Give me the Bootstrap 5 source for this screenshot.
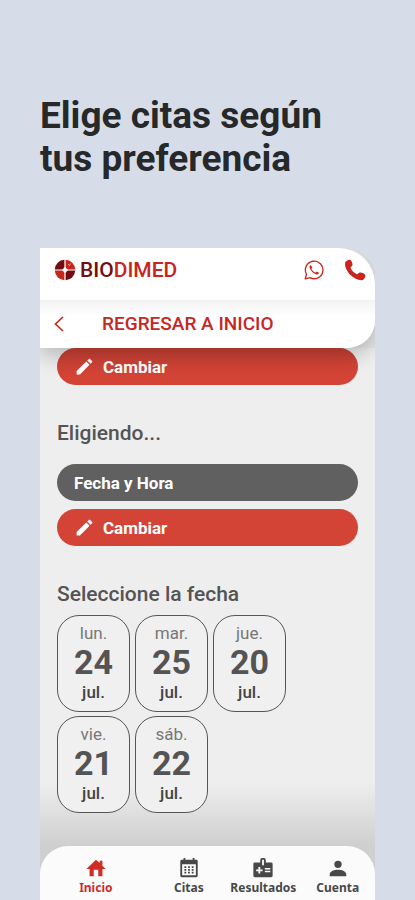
<!DOCTYPE html>
<html lang="es">
<head>
<meta charset="utf-8">
<meta name="viewport" content="width=device-width, initial-scale=1">
<title>Biodimed</title>
<link href="https://cdn.jsdelivr.net/npm/bootstrap@5.3.0/dist/css/bootstrap.min.css" rel="stylesheet">
<style>
  body { background: #d7dde8; font-family: Roboto, "Liberation Sans", sans-serif; color: #545454; }
  .page { padding: 94px 40px 0; }
  .headline { font-size: 37px; line-height: 43px; color: #262829; margin-bottom: 68px; }
  .phone { background: #e6e7e9; border-top-right-radius: 28px; }
  .top-block { background: #fff; border-radius: 0 36px 28px 0; box-shadow: 0 6px 22px rgba(0, 0, 0, .26); z-index: 1; }
  .brand-bar { height: 52px; padding: 0 9px 8px 14px; }
  .brand-name { font-size: 21px; line-height: 24px; font-weight: 500; color: #c9251c; text-decoration: none; }
  .brand-dark { color: #740c10; }
  .back-bar { height: 48px; padding: 0 14px; background: linear-gradient(#f3f3f3, #fff 16px); border-bottom-right-radius: 28px; }
  .back-link { font-size: 19px; line-height: 24px; font-weight: 500; color: #c5281f; text-decoration: none; gap: 38px; }
  .content-area { padding: 0 17px 33px; background: linear-gradient(#eeeeee calc(100% - 64px), #cfcfcf); }
  .pill { height: 37px; border: 0; border-radius: 19px; padding: 0 17px; font-size: 17px; line-height: 24px; font-weight: 700; color: #fff; }
  .pill-red { background: #d34436; gap: 8px; }
  .pill-top { background: linear-gradient(#c94034, #d34436 70%); }
  .pill-gray { background: #606060; }
  .section-title { font-size: 21px; line-height: 24px; font-weight: 500; color: #545454; padding-top: 36px; margin: 0; }
  .pill-stack { padding-top: 19px; }
  .dates { gap: 4px 5px; padding-top: 9px; }
  .date-btn { width: 73px; height: 97px; border: 1px solid #555; border-radius: 22px; background: #f0f0f0; color: #545454; padding: 0; }
  .date-day { font-size: 17px; line-height: 22px; font-weight: 400; color: #777; }
  .date-num { font-size: 34px; line-height: 36px; font-weight: 700; }
  .date-month { font-size: 17px; line-height: 25px; font-weight: 500; color: #444; }
  .nav-wrap { background: #cfcfcf; }
  .tabs { display: grid; grid-template-columns: 3fr 2fr 2fr 2fr; background: #fbfbfb; border-radius: 28px 28px 0 0; padding: 11px 0 4px; }
  .tab-link { font-family: "Noto Sans", sans-serif; font-size: 12px; line-height: 16px; font-weight: 700; color: #484848; text-decoration: none; gap: 1px; }
  .tab-active { color: #d02c25; }
</style>
<script src="https://cdn.jsdelivr.net/npm/bootstrap@5.3.0/dist/js/bootstrap.bundle.min.js"></script>
</head>
<body>
<div class="page min-vh-100 d-flex flex-column">
  <h1 class="headline fw-bold">Elige citas según<br>tus preferencia</h1>
  <div class="phone flex-grow-1 d-flex flex-column overflow-hidden">
    <header class="top-block position-relative">
      <div class="brand-bar d-flex align-items-center justify-content-between">
        <a class="brand-name d-flex align-items-center gap-1" href="#">
          <svg width="22" height="22" viewBox="0 0 22 22" aria-hidden="true">
            <path d="M10.400 .8A10 10 0 0 0 .8 10.400H8Q9.800 9.800 10.400 8Z" fill="#740c10"/>
            <path d="M11.600 .8A10 10 0 0 1 21.200 10.400H14Q12.200 9.800 11.600 8Z" fill="#c9251c"/>
            <path d="M10.400 21.200A10 10 0 0 1 .8 11.600H8Q9.800 12.200 10.400 14Z" fill="#c9251c"/>
            <path d="M11.600 21.200A10 10 0 0 0 21.200 11.600H14Q12.200 12.200 11.600 14Z" fill="#740c10"/>
            <path d="M14 5l1.500 1.500 1-2" stroke="#fff" stroke-width=".5" fill="none"/>
          </svg>
          <span><span class="brand-dark">BIO</span>DIMED</span>
        </a>
        <div class="d-flex align-items-center gap-3">
          <a href="#" class="d-flex me-1" aria-label="WhatsApp">
            <svg width="20" height="20" viewBox="0 0 20 20" fill="none"><path d="M1.200 18.800L2.500 14.200A8.800 8.800 0 1 1 5.900 17.600Z" stroke="#c9251c" stroke-width="1.300" stroke-linejoin="round"/><path d="M6.800 5C5.600 5.400 5.200 6.700 5.800 8.200 7 11.100 9 13.200 11.800 14.300 13.400 14.900 14.800 14.200 14.900 12.800L12.700 11.500 11.600 12.800C9.800 12.100 8.200 10.700 7.300 8.800L8.300 7.700Z" fill="#c9251c"/></svg>
          </a>
          <a href="#" class="d-flex" aria-label="Llamar">
            <svg width="22" height="22" viewBox="0 0 22 22" fill="#c9251c"><path d="M1.300 3.200C2.500 1.500 4.500 .4 6 .8 7.600 1.400 8.700 4.200 8.500 6 8.300 7.300 6.900 7.800 6.500 8.800 7.500 11.500 10 14 12.800 15.200 14 15 14.600 13.600 15.900 13.400 17.900 13.200 20.900 14.500 21.300 16.200 21.600 17.800 20.600 19.800 18.900 20.900 15.500 22 10 19.500 6.500 16 3 12.500 .2 7 1.300 3.200Z"/></svg>
          </a>
        </div>
      </div>
      <div class="back-bar d-flex align-items-center">
        <a class="back-link d-flex align-items-center" href="#">
          <svg width="10" height="16" viewBox="0 0 10 16" fill="none" stroke="#c5281f" stroke-width="1.700" aria-hidden="true"><path d="M9 1L1.500 8L9 15"/></svg>
          <span>REGRESAR A INICIO</span>
        </a>
      </div>
    </header>
    <main class="content-area flex-grow-1">
      <button type="button" class="pill pill-red pill-top d-flex align-items-center w-100">
        <svg width="21" height="21" viewBox="0 0 24 24" fill="#fff" aria-hidden="true"><path d="M3 17.250V21h3.750L17.810 9.940l-3.750-3.750L3 17.250zM20.710 7.040a1 1 0 0 0 0-1.410l-2.340-2.340a1 1 0 0 0-1.410 0l-1.830 1.830 3.750 3.750 1.830-1.830z"/></svg>
        <span>Cambiar</span>
      </button>
      <h2 class="section-title">Eligiendo...</h2>
      <div class="pill-stack d-grid gap-2">
        <button type="button" class="pill pill-gray text-start">Fecha y Hora</button>
        <button type="button" class="pill pill-red d-flex align-items-center">
          <svg width="21" height="21" viewBox="0 0 24 24" fill="#fff" aria-hidden="true"><path d="M3 17.250V21h3.750L17.810 9.940l-3.750-3.750L3 17.250zM20.710 7.040a1 1 0 0 0 0-1.410l-2.340-2.340a1 1 0 0 0-1.410 0l-1.830 1.830 3.750 3.750 1.830-1.830z"/></svg>
          <span>Cambiar</span>
        </button>
      </div>
      <h2 class="section-title">Seleccione la fecha</h2>
      <div class="dates d-flex flex-wrap">
        <button type="button" class="date-btn d-flex flex-column align-items-center justify-content-center"><span class="date-day">lun.</span><span class="date-num">24</span><span class="date-month">jul.</span></button>
        <button type="button" class="date-btn d-flex flex-column align-items-center justify-content-center"><span class="date-day">mar.</span><span class="date-num">25</span><span class="date-month">jul.</span></button>
        <button type="button" class="date-btn d-flex flex-column align-items-center justify-content-center"><span class="date-day">jue.</span><span class="date-num">20</span><span class="date-month">jul.</span></button>
        <button type="button" class="date-btn d-flex flex-column align-items-center justify-content-center"><span class="date-day">vie.</span><span class="date-num">21</span><span class="date-month">jul.</span></button>
        <button type="button" class="date-btn d-flex flex-column align-items-center justify-content-center"><span class="date-day">sáb.</span><span class="date-num">22</span><span class="date-month">jul.</span></button>
      </div>
    </main>
    <div class="nav-wrap">
      <nav class="tabs">
        <a class="tab-link tab-active d-flex flex-column align-items-center" href="#">
          <svg width="22" height="22" viewBox="0 0 24 24" fill="currentColor" aria-hidden="true"><path d="M9.500 21v-7h5v7H19v-8h3.500L19 9.500V4h-3v2.500L12 3 1.500 13H5v8z"/></svg>
          Inicio
        </a>
        <a class="tab-link d-flex flex-column align-items-center" href="#">
          <svg width="22" height="22" viewBox="0 0 24 24" fill="currentColor" aria-hidden="true"><path fill-rule="evenodd" d="M4 3h2V1h2v2h8V1h2v2h2q1.500 0 1.500 1.500v16Q21.500 22 20 22H4q-1.500 0-1.500-1.500v-16Q2.500 3 4 3zM4.500 8v12h15V8z"/><path d="M7 10h2v2H7zM11 10h2v2h-2zM15 10h2v2h-2zM7 13h2v2H7zM11 13h2v2h-2zM15 13h2v2h-2zM7 16h2v2H7zM11 16h2v2h-2zM15 16h2v2h-2z"/></svg>
          Citas
        </a>
        <a class="tab-link d-flex flex-column align-items-center" href="#">
          <svg width="22" height="22" viewBox="0 0 24 24" aria-hidden="true"><path fill="currentColor" fill-rule="evenodd" d="M3 6h6V3q0-2 2-2h2q2 0 2 2v3h6q1.500 0 1.500 1.500v13Q22.500 22 21 22H3q-1.500 0-1.500-1.500v-13Q1.500 6 3 6zM11 3v6h2V3zM7 11v2.500H4.500v2H7V18h2v-2.500h2.500v-2H9V11zM14 12v1.500h6V12zM14 15v1.500h6V15z"/></svg>
          Resultados
        </a>
        <a class="tab-link d-flex flex-column align-items-center" href="#">
          <svg width="22" height="22" viewBox="0 0 24 24" fill="currentColor" aria-hidden="true"><path d="M12 12a4 4 0 1 0 0-8 4 4 0 0 0 0 8zm0 2c-3.500 0-9 1.340-9 5v2h18v-2c0-3.660-5.500-5-9-5z"/></svg>
          Cuenta
        </a>
      </nav>
    </div>
  </div>
</div>
</body>
</html>
